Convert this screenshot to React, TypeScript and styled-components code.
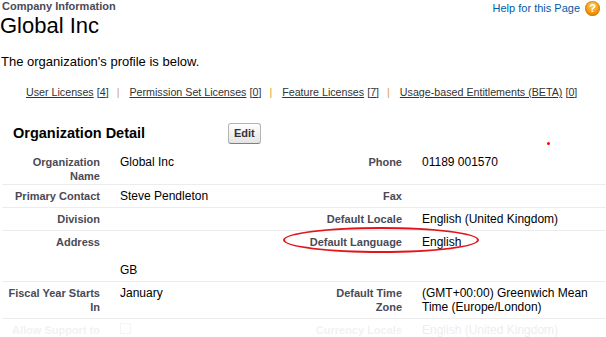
import React from "react";
import styled, { createGlobalStyle } from "styled-components";

const GlobalStyle = createGlobalStyle`
    html, body {
        margin: 0;
        padding: 0;
        overflow: hidden;
        background: #fff;
    }
    body {
        font-family: "Liberation Sans", Arial, sans-serif;
        color: #000;
    }
`;

const Page = styled.div`
    width: 606px;
`;

const TopBar = styled.div`
    display: flex;
    justify-content: space-between;
    align-items: flex-start;
`;

const PageType = styled.h1`
    margin: 0;
    padding-left: 2px;
    font-size: 11px;
    line-height: 13px;
    font-weight: 700;
    color: #4a4a56;
`;

const PageName = styled.h2`
    margin: 0;
    font-size: 22px;
    line-height: 25px;
    font-weight: 400;
    color: #000;
`;

const HelpLink = styled.a`
    display: flex;
    align-items: center;
    gap: 5px;
    margin: 1px 6px 0 0;
    font-size: 11px;
    line-height: 13px;
    color: #015ba7;
    text-decoration: none;
`;

const HelpIcon = styled.span`
    display: inline-flex;
    align-items: center;
    justify-content: center;
    width: 15px;
    height: 15px;
    border-radius: 50%;
    background: radial-gradient(circle at 50% 30%, #fdd062 0%, #f29a12 55%, #d27000 100%);
    box-shadow: inset 0 0 0 1px rgba(190, 100, 0, 0.45);
    color: #fff;
    font-size: 11px;
    font-weight: 700;
    line-height: 15px;
`;

const Description = styled.p`
    margin: 16px 0 0 1px;
    font-size: 13px;
    line-height: 15px;
`;

const LinkBar = styled.div`
    margin-top: 17px;
    padding-left: 26px;
    font-size: 10.7px;
    line-height: 13px;
    color: #333;
`;

const LicenseLink = styled.a`
    color: #333;
    text-decoration: underline;
`;

const Count = styled.a`
    margin-left: 3px;
    color: #333;
    text-decoration: underline;
`;

const Separator = styled.span`
    margin: 0 10px 0 8px;
    color: #e0a13a;
`;

const PageBlock = styled.div`
    margin: 20px 0 0 2px;
`;

const BlockHeader = styled.div`
    position: relative;
    display: flex;
    align-items: center;
    padding: 4px 0 7px 11px;
`;

const BlockTitle = styled.h2`
    margin: 0;
    width: 215px;
    font-size: 14.5px;
    line-height: 17px;
    font-weight: 700;
    color: #000;
`;

const EditButton = styled.button`
    box-sizing: border-box;
    height: 21px;
    padding: 3px 5px;
    border: 1px solid #b5b5b5;
    border-bottom-color: #7f7f7f;
    border-radius: 3px;
    background: linear-gradient(#ffffff, #e4e4e4);
    font-family: inherit;
    font-size: 11px;
    line-height: 13px;
    font-weight: 700;
    color: #333;
`;

const Dot = styled.span`
    position: absolute;
    left: 545px;
    top: 23px;
    width: 3px;
    height: 3px;
    border-radius: 50%;
    background: #f00;
`;

const Row = styled.div<{ $faded?: boolean }>`
    position: relative;
    display: grid;
    grid-template-columns: 110px 192px 110px 1fr;
    padding: 4px 0;
    border-top: 1px solid #ececec;
    & > div {
        opacity: ${(p) => (p.$faded ? 0.07 : 1)};
    }
    &:first-child {
        border-top: none;
        padding-bottom: 1px;
    }
`;

const Label = styled.div`
    padding: 0 12px 0 4px;
    text-align: right;
    font-size: 11px;
    line-height: 14px;
    font-weight: 700;
    color: #4a4a56;
`;

const Value = styled.div`
    padding: 0 10px 0 8px;
    font-size: 12px;
    line-height: 14px;
    color: #000;
`;

const Highlight = styled.span`
    position: absolute;
    left: 281px;
    top: -4px;
    width: 196px;
    height: 26px;
    box-sizing: border-box;
    border: 2px solid #e3141b;
    border-radius: 50%;
    pointer-events: none;
`;

const Checkbox = styled.span`
    display: inline-block;
    width: 11px;
    height: 11px;
    border: 1px solid #666;
    box-sizing: border-box;
`;

const licenses = [
    { name: "User Licenses", count: 4 },
    { name: "Permission Set Licenses", count: 0 },
    { name: "Feature Licenses", count: 7 },
    { name: "Usage-based Entitlements (BETA)", count: 0 },
];

const App = () => {
    return (
        <Page>
            <GlobalStyle />
            <TopBar>
                <div>
                    <PageType>Company Information</PageType>
                    <PageName>Global Inc</PageName>
                </div>
                <HelpLink href="#">
                    Help for this Page
                    <HelpIcon>?</HelpIcon>
                </HelpLink>
            </TopBar>
            <Description>The organization's profile is below.</Description>
            <LinkBar>
                {licenses.map((l, i) => (
                    <React.Fragment key={l.name}>
                        {i > 0 && <Separator>|</Separator>}
                        <LicenseLink href="#">{l.name}</LicenseLink>
                        <Count href="#">[{l.count}]</Count>
                    </React.Fragment>
                ))}
            </LinkBar>
            <PageBlock>
                <BlockHeader>
                    <BlockTitle>Organization Detail</BlockTitle>
                    <EditButton>Edit</EditButton>
                    <Dot />
                </BlockHeader>
                <div>
                    <Row>
                        <Label>Organization Name</Label>
                        <Value>Global Inc</Value>
                        <Label>Phone</Label>
                        <Value>01189 001570</Value>
                    </Row>
                    <Row>
                        <Label>Primary Contact</Label>
                        <Value>Steve Pendleton</Value>
                        <Label>Fax</Label>
                        <Value></Value>
                    </Row>
                    <Row>
                        <Label>Division</Label>
                        <Value></Value>
                        <Label>Default Locale</Label>
                        <Value>English (United Kingdom)</Value>
                    </Row>
                    <Row>
                        <Label>Address</Label>
                        <Value>
                            <br />
                            <br />
                            GB
                        </Value>
                        <Label>Default Language</Label>
                        <Value>English</Value>
                        <Highlight />
                    </Row>
                    <Row>
                        <Label>Fiscal Year Starts In</Label>
                        <Value>January</Value>
                        <Label>Default Time Zone</Label>
                        <Value>(GMT+00:00) Greenwich Mean Time (Europe/London)</Value>
                    </Row>
                    <Row $faded>
                        <Label>Allow Support to Activate Users</Label>
                        <Value>
                            <Checkbox />
                        </Value>
                        <Label>Currency Locale</Label>
                        <Value>English (United Kingdom)</Value>
                    </Row>
                </div>
            </PageBlock>
        </Page>
    );
};

export default App;
